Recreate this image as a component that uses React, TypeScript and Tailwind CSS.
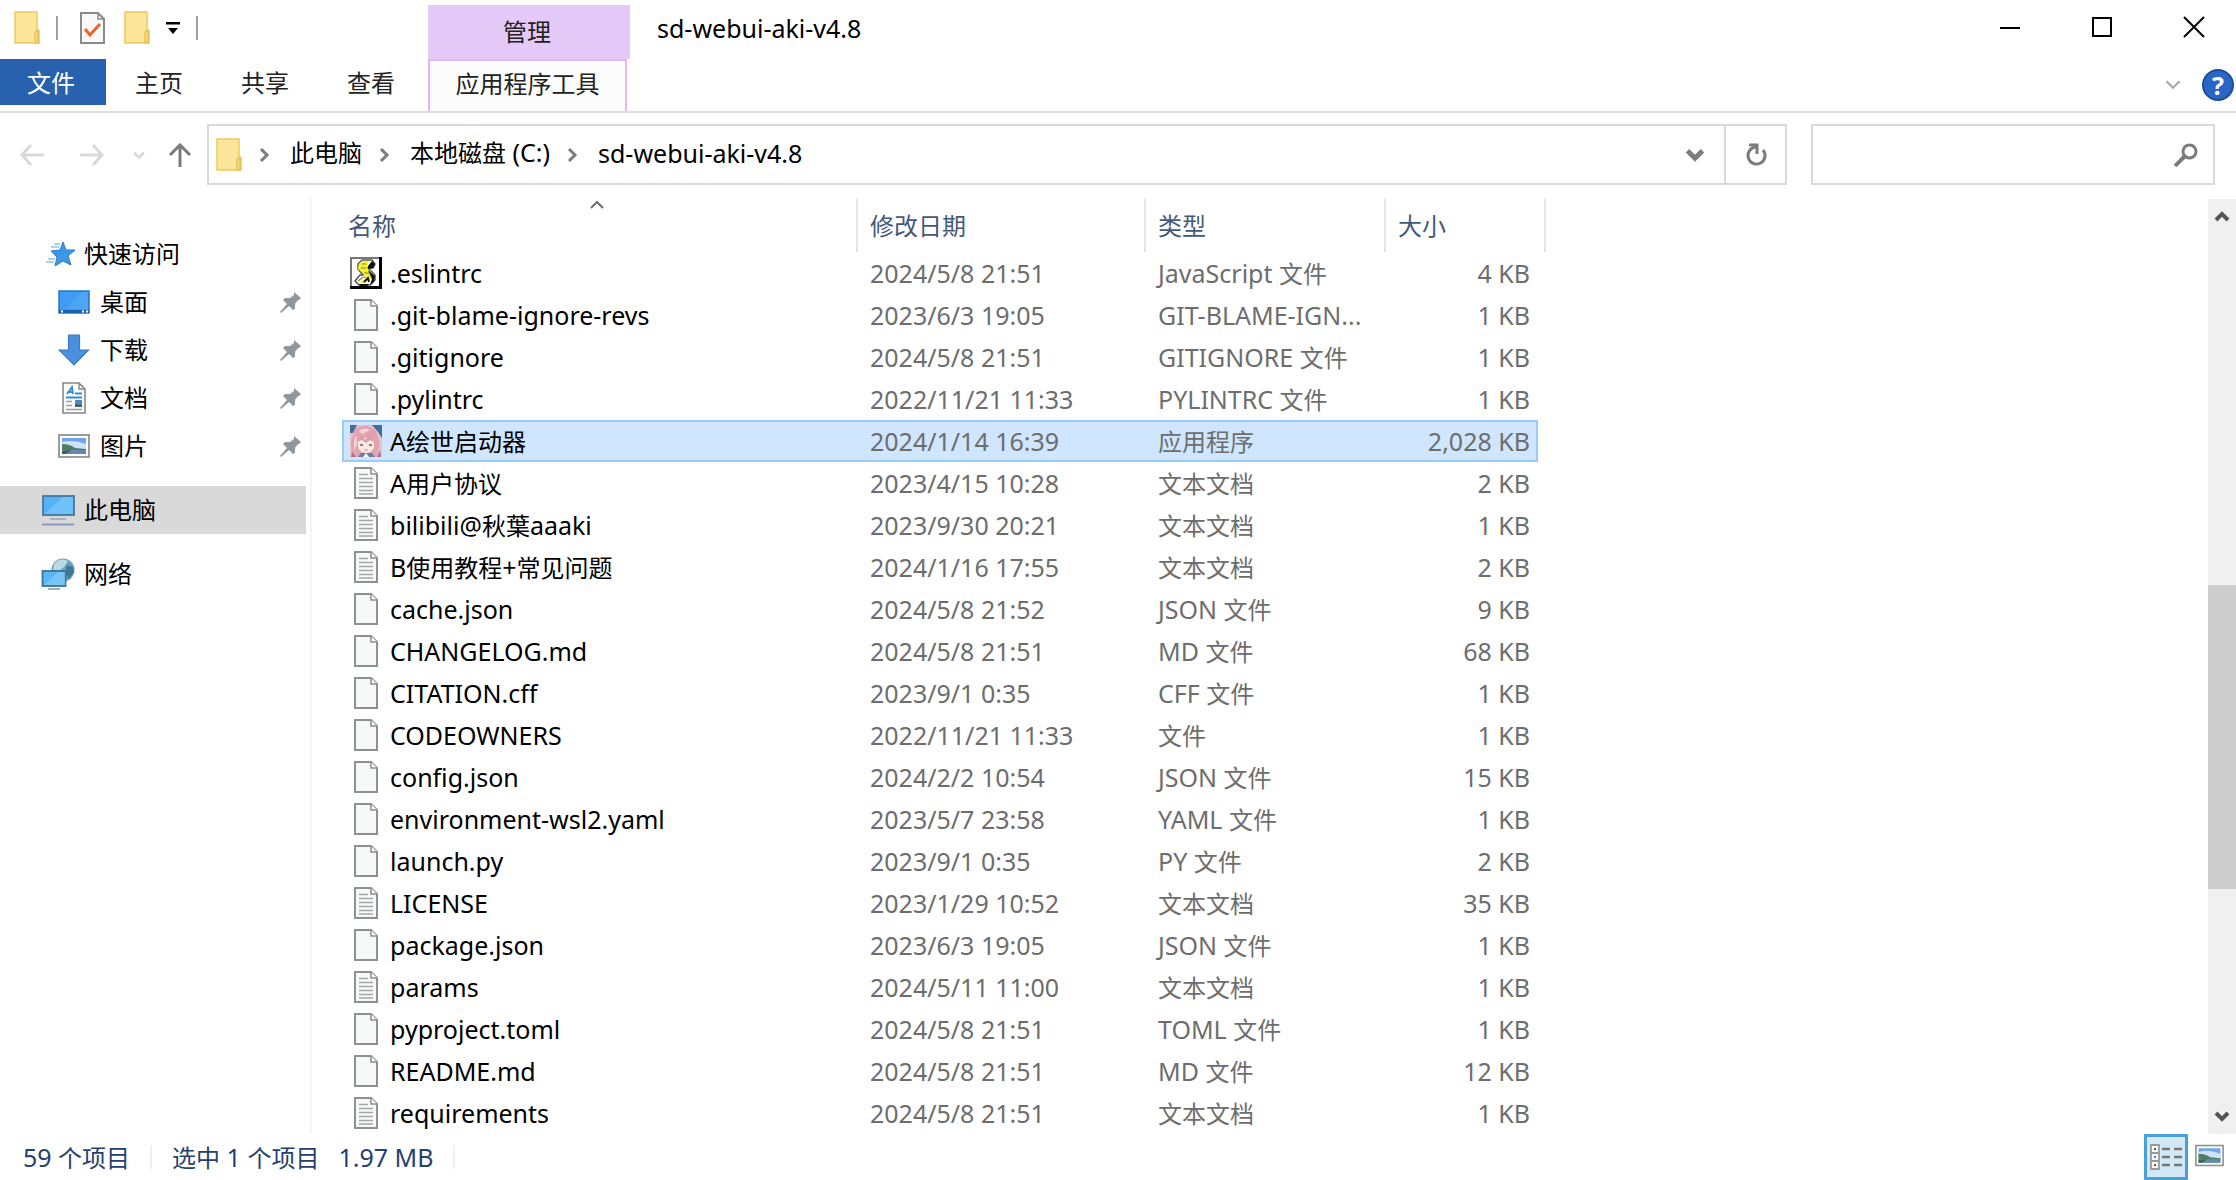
import type { ReactNode } from "react";
import clsx from "clsx";

type FileKind = "script" | "blank" | "text" | "app";

type FileEntry = {
  name: string;
  date: string;
  type: string;
  size: string;
  kind: FileKind;
  selected?: boolean;
};

const FILES: FileEntry[] = [
  { name: ".eslintrc", date: "2024/5/8 21:51", type: "JavaScript 文件", size: "4 KB", kind: "script" },
  { name: ".git-blame-ignore-revs", date: "2023/6/3 19:05", type: "GIT-BLAME-IGN...", size: "1 KB", kind: "blank" },
  { name: ".gitignore", date: "2024/5/8 21:51", type: "GITIGNORE 文件", size: "1 KB", kind: "blank" },
  { name: ".pylintrc", date: "2022/11/21 11:33", type: "PYLINTRC 文件", size: "1 KB", kind: "blank" },
  { name: "A绘世启动器", date: "2024/1/14 16:39", type: "应用程序", size: "2,028 KB", kind: "app", selected: true },
  { name: "A用户协议", date: "2023/4/15 10:28", type: "文本文档", size: "2 KB", kind: "text" },
  { name: "bilibili@秋葉aaaki", date: "2023/9/30 20:21", type: "文本文档", size: "1 KB", kind: "text" },
  { name: "B使用教程+常见问题", date: "2024/1/16 17:55", type: "文本文档", size: "2 KB", kind: "text" },
  { name: "cache.json", date: "2024/5/8 21:52", type: "JSON 文件", size: "9 KB", kind: "blank" },
  { name: "CHANGELOG.md", date: "2024/5/8 21:51", type: "MD 文件", size: "68 KB", kind: "blank" },
  { name: "CITATION.cff", date: "2023/9/1 0:35", type: "CFF 文件", size: "1 KB", kind: "blank" },
  { name: "CODEOWNERS", date: "2022/11/21 11:33", type: "文件", size: "1 KB", kind: "blank" },
  { name: "config.json", date: "2024/2/2 10:54", type: "JSON 文件", size: "15 KB", kind: "blank" },
  { name: "environment-wsl2.yaml", date: "2023/5/7 23:58", type: "YAML 文件", size: "1 KB", kind: "blank" },
  { name: "launch.py", date: "2023/9/1 0:35", type: "PY 文件", size: "2 KB", kind: "blank" },
  { name: "LICENSE", date: "2023/1/29 10:52", type: "文本文档", size: "35 KB", kind: "text" },
  { name: "package.json", date: "2023/6/3 19:05", type: "JSON 文件", size: "1 KB", kind: "blank" },
  { name: "params", date: "2024/5/11 11:00", type: "文本文档", size: "1 KB", kind: "text" },
  { name: "pyproject.toml", date: "2024/5/8 21:51", type: "TOML 文件", size: "1 KB", kind: "blank" },
  { name: "README.md", date: "2024/5/8 21:51", type: "MD 文件", size: "12 KB", kind: "blank" },
  { name: "requirements", date: "2024/5/8 21:51", type: "文本文档", size: "1 KB", kind: "text" },
];

/* Latin runs are set a little larger than the Chinese ones around them */
function Label({ children }: { children: string }) {
  return (
    <>
      {children.split(/([\u4e00-\u9fff]+)/).map((run, i) =>
        i % 2 === 1 ? (
          <span key={i} className="text-[24px]">
            {run}
          </span>
        ) : (
          run
        ),
      )}
    </>
  );
}

/* ---------- Icons ---------- */

function FolderIcon() {
  return (
    <svg className="h-[34px] w-[26px] shrink-0" viewBox="0 0 26 34" aria-hidden="true">
      <path d="M1 1h22v19h2v12H1z" fill="#fbe69a" stroke="#ecca58" strokeWidth="1.5" />
      <path d="M21 32V21l3-2v13z" fill="#f8dc82" stroke="#e3bd4a" strokeWidth="1.2" />
    </svg>
  );
}

function CheckDocIcon() {
  return (
    <svg className="h-[32px] w-[25px]" viewBox="0 0 25 32" aria-hidden="true">
      <path d="M1 1h17l6 6v24H1z" fill="#f9f9fa" stroke="#8a8a8a" strokeWidth="2" />
      <path d="M18 1v6h6" fill="none" stroke="#8a8a8a" strokeWidth="1.5" />
      <path d="M5 17l5 6 10-11" fill="none" stroke="#e9642a" strokeWidth="3" />
    </svg>
  );
}

function Chevron({ className, dir, width = 3 }: { className?: string; dir: "up" | "down" | "right"; width?: number }) {
  const d = { up: "M2 9l6-6 6 6", down: "M2 3l6 6 6-6", right: "M5 0l6 6-6 6" }[dir];
  return (
    <svg className={clsx("overflow-visible", className)} viewBox="0 0 16 12" fill="none" stroke="currentColor" strokeWidth={width} aria-hidden="true">
      <path d={d} />
    </svg>
  );
}

function Arrow({ className, d }: { className?: string; d: string }) {
  return (
    <svg className={clsx("h-6 w-6", className)} viewBox="0 0 24 24" fill="none" stroke="currentColor" strokeWidth="3" aria-hidden="true">
      <path d={d} />
    </svg>
  );
}

function PageIcon({ lines }: { lines?: boolean }) {
  return (
    <svg className="h-8 w-6" viewBox="0 0 24 32" aria-hidden="true">
      <path d="M1 1h16l6 6v24H1z" fill="#f7f8f9" stroke="#8e9091" strokeWidth="2" />
      <path d="M17 1v6h6" fill="#fff" stroke="#8e9091" strokeWidth="1.6" />
      {lines && <path d="M5 7.5h9M5 11.5h14M5 15.5h14M5 19.5h14M5 23.5h14M5 27h14" stroke="#a4a6a7" strokeWidth="1.6" />}
    </svg>
  );
}

function ScriptIcon() {
  return (
    <svg className="h-8 w-8" viewBox="0 0 32 32" aria-hidden="true">
      <rect x="1" y="1" width="29" height="29" fill="#fff" stroke="#777" strokeWidth="2" />
      <path d="M0 30.5h32M30.5 0v32" stroke="#000" strokeWidth="3" />
      <path d="M12 3h10l3 4-2 4h-5l7 7v5l-5 5H9l-4-4 5-6h3l-5-6V7z" fill="#fff" stroke="#555" strokeWidth="1.5" />
      <path d="M12 4h7l-2 7 7 7-1 4-4 1-6 4-3-2 6-4-1-3-7-6 1-5z" fill="#f6f02f" />
      <path d="M18 9l4-5 3 3-2 4-5 1zM18 13l7 6-1 6-4 3 2-6zM9 27h10l-2 2h-7z" fill="#111" />
      <path d="M12 7h4M11 11h5M14 16h5M11 21l5-1M8 24l4-3" stroke="#8a8620" strokeWidth="1.2" />
      <path d="M14 25l4-4 1 4" fill="none" stroke="#111" strokeWidth="1.8" />
    </svg>
  );
}

function AvatarIcon() {
  return (
    <svg className="h-8 w-8" viewBox="0 0 32 32" aria-hidden="true">
      <rect width="32" height="32" rx="1" fill="#e8c1c9" />
      <path d="M0 0h7L3 8H0zM22 0h10v13l-4-6z" fill="#3f6e9c" />
      <path d="M5 4q10-8 21 2l4 12-3 14H2L1 17z" fill="#e0a3b1" />
      <path d="M9 6q5-4 11-1l-8 4zM4 15l2-5 1 9-3 8z" fill="#f6d3d8" />
      <path d="M8 15q8-5 16 0v7q-2 6-8 6t-8-6z" fill="#f8e9e2" />
      <path d="M7 17l5-8 3 6 4-6 6 9-5-3-4 3-4-3z" fill="#dc9cab" />
      <path d="M10 20h3M19 20h3" stroke="#93787c" strokeWidth="2" />
      <path d="M14 25h4" stroke="#cf9a97" strokeWidth="1" />
      <path d="M8 32l3-4h11l3 4z" fill="#6a7da5" />
      <path d="M13 32l3-4 3 4z" fill="#fff" />
      <path d="M2 27l4 5H1zM30 25l-3 7h4z" fill="#b76f86" />
    </svg>
  );
}

function StarIcon() {
  return (
    <svg className="h-6 w-[30px]" viewBox="0 0 30 24" aria-hidden="true">
      <path d="M18 0l3 8 9 0-7 6 3 9-8-4-8 5 2-9-6-6 9-1z" fill="#3c97e4" stroke="#2c7cc8" strokeWidth="1" />
      <path d="M9 2h6M6 5h8M3 17h7M1 20h8" stroke="#8cc4f1" strokeWidth="1.4" />
    </svg>
  );
}

function DesktopIcon() {
  return (
    <svg className="h-8 w-8" viewBox="0 0 32 32" aria-hidden="true">
      <rect x="1" y="5" width="30" height="22" fill="#3f9bf3" stroke="#2476c5" strokeWidth="1.5" />
      <path d="M8 23L24 6h6v17z" fill="#5aabf7" opacity=".6" />
      <path d="M1 25.5h30" stroke="#1b62ab" strokeWidth="3" />
      <path d="M3 25.5h2M24 25.5h2M28 25.5h2" stroke="#fff" strokeWidth="2" />
    </svg>
  );
}

function DownloadIcon() {
  return (
    <svg className="h-8 w-8" viewBox="0 0 32 32" aria-hidden="true">
      <path d="M10.5 1h11v15h9L16 31 1 16h9.5z" fill="#4a90de" stroke="#3b7ac4" strokeWidth="1.2" />
    </svg>
  );
}

function DocumentIcon() {
  return (
    <svg className="h-8 w-8" viewBox="0 0 32 32" aria-hidden="true">
      <path d="M5 1h16l6 6v24H5z" fill="#fff" stroke="#858789" strokeWidth="1.6" />
      <path d="M21 1v6h6" fill="none" stroke="#858789" strokeWidth="1.4" />
      <path d="M9 12l5-7 1 7M11 10h4M17 11.5h7" fill="none" stroke="#2f8bd8" strokeWidth="1.8" />
      <path d="M8 15.5h16" stroke="#2f8bd8" strokeWidth="2" />
      <path d="M8 19.5h6M8 23.5h6M8 27.5h16" stroke="#9b9d9f" strokeWidth="1.5" />
      <path d="M17 18h7v7h-7z" fill="#4e86c8" />
      <path d="M17 22l7 1v2h-7z" fill="#3e6650" />
    </svg>
  );
}

function PictureIcon({ className = "h-8 w-8" }: { className?: string }) {
  return (
    <svg className={className} viewBox="0 0 32 32" aria-hidden="true">
      <rect x="1" y="5" width="30" height="22" fill="#fff" stroke="#919395" strokeWidth="1.8" />
      <path d="M4 8h24v16H4z" fill="#6fa5ee" />
      <path d="M4 12q12-3 24 2v6H4z" fill="#cfe2f6" />
      <path d="M4 14q8 0 13 4l11 1v2H4z" fill="#4f7e62" />
      <path d="M4 20h24v4H4z" fill="#6288ad" />
      <path d="M4 21l9-1-5 4H4z" fill="#3d6350" />
    </svg>
  );
}

function ComputerIcon() {
  return (
    <svg className="h-8 w-[34px]" viewBox="0 0 34 32" aria-hidden="true">
      <rect x="2" y="2" width="31" height="19" fill="#55b2f6" stroke="#44779f" strokeWidth="1.8" />
      <path d="M3 20L22 3h10v17z" fill="#84cbfb" opacity=".6" />
      <path d="M9 25h16" stroke="#9aa9b5" strokeWidth="1.6" />
      <path d="M1 30.5h32" stroke="#8794b8" strokeWidth="1.8" />
    </svg>
  );
}

function NetworkIcon() {
  return (
    <svg className="h-8 w-[34px]" viewBox="0 0 34 32" aria-hidden="true">
      <circle cx="22" cy="12" r="11.5" fill="#6a9fbd" />
      <path d="M13 6q6-7 14-3l-4 6-5 4-6-1z" fill="#b9dbe6" />
      <path d="M26 7l6 2 1 5-5 7-4-6z" fill="#3f7995" />
      <rect x="1.5" y="13" width="23" height="15" fill="#5ab5f5" stroke="#3c739a" strokeWidth="1.8" />
      <path d="M3 27L17 14h7v13z" fill="#8ccffb" opacity=".6" />
      <path d="M7 31h12" stroke="#8194a1" strokeWidth="1.5" />
    </svg>
  );
}

function PinIcon() {
  return (
    <svg className="h-[21px] w-[21px]" viewBox="0 0 21 21" aria-hidden="true">
      <path d="M14 0l7 6-2 2-1 0-3 4 0 5-2 1-4-4-8 7-1-1 7-8-4-4 2-2 5 0 4-3 0-1z" fill="#8e979e" />
    </svg>
  );
}

const FILE_ICONS: Record<FileKind, ReactNode> = {
  script: <ScriptIcon />,
  blank: <PageIcon />,
  text: <PageIcon lines />,
  app: <AvatarIcon />,
};

/* ---------- Title bar and ribbon ---------- */

function TitleBar() {
  return (
    <header className="flex h-[113px] shrink-0 border-b-2 border-[#dfdfdf]">
      <div className="flex w-[428px] shrink-0 flex-col">
        <div className="flex h-[59px] items-center pb-1 pl-[14px]">
          <FolderIcon />
          <span className="ml-4 h-6 w-0.5 bg-[#a0a0a0]" />
          <button type="button" aria-label="属性" className="ml-[22px]">
            <CheckDocIcon />
          </button>
          <button type="button" aria-label="新建文件夹" className="ml-[19px]">
            <FolderIcon />
          </button>
          <button type="button" aria-label="自定义快速访问工具栏" className="ml-4">
            <svg className="h-3 w-[14px]" viewBox="0 0 14 12" aria-hidden="true">
              <path d="M0 0h14v2.5H0zM2 6h10l-5 6z" fill="#000" />
            </svg>
          </button>
          <span className="ml-4 h-6 w-0.5 bg-[#a0a0a0]" />
        </div>

        <nav aria-label="功能区" className="flex h-[46px] text-[24px] text-[#222]">
          <button type="button" className="w-[106px] bg-[#2862ae] pt-0.5 pr-1 text-white">
            文件
          </button>
          <button type="button" className="w-[106px] pt-0.5">主页</button>
          <button type="button" className="w-[106px] pt-0.5">共享</button>
          <button type="button" className="w-[106px] pt-0.5">查看</button>
        </nav>
      </div>

      <div className="mt-[5px] flex w-[202px] shrink-0 flex-col text-[24px] text-[#222]">
        <div className="flex h-[54px] items-center justify-center bg-[#e5c9f9] pr-1">管理</div>
        <button type="button" className="mr-[3px] flex-1 border-x-2 border-t-2 border-[#dfb9f6] bg-[#fcfcfc] pb-1">
          应用程序工具
        </button>
      </div>

      <h1 className="mt-[10px] ml-[27px] flex-1 leading-9">sd-webui-aki-v4.8</h1>

      <div className="flex flex-col items-end">
        <div className="flex h-[54px] items-center gap-2">
          <button type="button" aria-label="最小化" className="flex w-[84px] justify-center">
            <svg className="h-[22px] w-[22px]" viewBox="0 0 22 22" aria-hidden="true">
              <path d="M1 12h20" stroke="#000" strokeWidth="2" />
            </svg>
          </button>
          <button type="button" aria-label="最大化" className="flex w-[84px] justify-center">
            <svg className="h-[22px] w-[22px]" viewBox="0 0 22 22" aria-hidden="true">
              <path d="M2 2h18v18H2z" fill="none" stroke="#000" strokeWidth="2" />
            </svg>
          </button>
          <button type="button" aria-label="关闭" className="flex w-[84px] justify-center">
            <svg className="h-[22px] w-[22px]" viewBox="0 0 22 22" aria-hidden="true">
              <path d="M1 1l20 20M21 1L1 21" stroke="#000" strokeWidth="2" />
            </svg>
          </button>
        </div>
        <div className="flex flex-1 items-center gap-5 pt-1 pr-[2px]">
          <button type="button" aria-label="展开功能区" className="text-[#a8a8a8]">
            <Chevron dir="down" width={2} className="h-[13px] w-[18px]" />
          </button>
          <button type="button" aria-label="帮助" className="flex h-8 w-8 items-center justify-center rounded-full border-2 border-[#1b4f96] bg-[#2a66c8] text-[25px] leading-7 font-bold text-white">
            ?
          </button>
        </div>
      </div>
    </header>
  );
}

/* ---------- Address bar ---------- */

const CRUMBS = ["此电脑", "本地磁盘 (C:)", "sd-webui-aki-v4.8"];

function AddressBar() {
  return (
    <div className="flex shrink-0 pt-[11px] pr-[21px] pb-[14px]">
      <div className="flex w-[207px] shrink-0 items-center pl-[20px]">
        <button type="button" aria-label="后退" className="text-[#d9d9d9]">
          <Arrow d="M24 12H2M11 2L2 12l9 10" />
        </button>
        <button type="button" aria-label="前进" className="ml-9 text-[#d9d9d9]">
          <Arrow d="M0 12h22M13 2l9 10-9 10" />
        </button>
        <button type="button" aria-label="最近浏览的位置" className="ml-7 text-[#d9d9d9]">
          <Chevron dir="down" className="h-[10px] w-[14px]" />
        </button>
        <button type="button" aria-label="上移" className="ml-[22px] text-[#7c7c7c]">
          <Arrow d="M12 24V2M2 12L12 2l10 10" />
        </button>
      </div>

      <div className="flex h-[61px] flex-1 items-center border-2 border-[#d9d9d9] pl-[7px]">
        <FolderIcon />
        {CRUMBS.map((crumb) => (
          <div key={crumb} className="flex items-center">
            <Chevron dir="right" className="mr-[18px] ml-[14px] h-3 w-4 text-[#7c7c7c]" />
            <button type="button" className="pb-1 leading-8">
              <Label>{crumb}</Label>
            </button>
          </div>
        ))}
        <button type="button" aria-label="以前的位置" className="mr-[19px] ml-auto text-[#7c7c7c]">
          <Chevron dir="down" width={4} className="h-[15px] w-5" />
        </button>
        <button type="button" aria-label="刷新" className="flex h-full w-[61px] items-center justify-center border-l-2 border-[#d9d9d9]">
          <svg className="h-6 w-6" viewBox="0 0 24 24" fill="none" stroke="#7c7c7c" strokeWidth="3" aria-hidden="true">
            <path d="M19 7a8.5 8.5 0 1 1-7-3" />
            <path d="M5 2h8v9" />
          </svg>
        </button>
      </div>

      <label className="ml-6 flex w-[404px] shrink-0 items-center border-2 border-[#d9d9d9] pr-[15px]">
        <input type="text" aria-label="搜索" className="h-full min-w-0 flex-1 px-3 outline-none" />
        <svg className="h-6 w-6" viewBox="0 0 24 24" fill="none" stroke="#7c7c7c" aria-hidden="true">
          <circle cx="15.5" cy="8.5" r="6.5" strokeWidth="3" />
          <path d="M11 13L1 23" strokeWidth="4" />
        </svg>
      </label>
    </div>
  );
}

/* ---------- Navigation pane ---------- */

const QUICK_ACCESS = [
  { label: "桌面", icon: <DesktopIcon /> },
  { label: "下载", icon: <DownloadIcon /> },
  { label: "文档", icon: <DocumentIcon /> },
  { label: "图片", icon: <PictureIcon /> },
];

function Sidebar() {
  return (
    <nav aria-label="导航窗格" className="w-[312px] shrink-0 border-r-2 border-[#f5f5f5] pt-[31px] pr-1 text-[24px] leading-8">
      <a href="#quick" className="flex h-12 items-center gap-[9px] pl-[45px]">
        <StarIcon />
        快速访问
      </a>
      {QUICK_ACCESS.map((item) => (
        <a key={item.label} href={`#${item.label}`} className="flex h-12 items-center gap-[10px] pr-[5px] pl-[58px]">
          {item.icon}
          <span className="flex-1">{item.label}</span>
          <PinIcon />
        </a>
      ))}
      <a href="#pc" className="mt-4 flex h-12 items-center gap-[9px] bg-[#d9d9d9] pl-[41px]">
        <ComputerIcon />
        此电脑
      </a>
      <a href="#network" className="mt-4 flex h-12 items-center gap-[9px] pl-[41px]">
        <NetworkIcon />
        网络
      </a>
    </nav>
  );
}

/* ---------- File list ---------- */

function FileRow({ file }: { file: FileEntry }) {
  const cell = file.selected ? "border-y-2 border-[#99cdf8] bg-[#cfe6fe]" : "";

  return (
    <tr className="h-[42px]" aria-selected={file.selected}>
      <td className={clsx("p-0", cell, file.selected && "border-l-2")}>
        <div className={clsx("flex items-center gap-2", file.selected ? "pl-[6px]" : "pl-2")}>
          <span className="flex w-8 justify-center">{FILE_ICONS[file.kind]}</span>
          <span className="text-black">
            <Label>{file.name}</Label>
          </span>
        </div>
      </td>
      <td className={clsx("p-0 pl-3", cell)}>{file.date}</td>
      <td className={clsx("p-0 pl-3", cell)}>
        <Label>{file.type}</Label>
      </td>
      <td className={clsx("p-0 text-right", cell, file.selected ? "border-r-2 pr-[6px]" : "pr-2")}>{file.size}</td>
      <td className="p-0" />
    </tr>
  );
}

function FileList() {
  return (
    <main className="min-w-0 flex-1 overflow-hidden pl-[30px]">
      <table className="w-[1204px] table-fixed border-separate border-spacing-0 leading-[34px] whitespace-nowrap text-[#6d6d6d]">
        <colgroup>
          <col className="w-[516px]" />
          <col className="w-[288px]" />
          <col className="w-[240px]" />
          <col className="w-[152px]" />
          <col className="w-[8px]" />
        </colgroup>
        <thead className="text-[24px] text-[#44597a]">
          <tr className="h-[53px]">
            <th scope="col" aria-sort="ascending" className="relative border-r-2 border-[#e5e5e5] p-0 pl-[6px] text-left font-normal">
              名称
              <Chevron dir="up" width={2} className="absolute top-0 left-[247px] h-3 w-4 text-[#6d6d6d]" />
            </th>
            <th scope="col" className="border-r-2 border-[#e5e5e5] p-0 pl-3 text-left font-normal">修改日期</th>
            <th scope="col" className="border-r-2 border-[#e5e5e5] p-0 pl-3 text-left font-normal">类型</th>
            <th scope="col" colSpan={2} className="border-r-2 border-[#e5e5e5] p-0 pl-3 text-left font-normal">大小</th>
          </tr>
        </thead>
        <tbody>
          {FILES.map((file) => (
            <FileRow key={file.name} file={file} />
          ))}
        </tbody>
      </table>
    </main>
  );
}

function ScrollBar() {
  return (
    <div className="flex w-7 shrink-0 flex-col bg-[#f0f0f0] text-[#555]">
      <button type="button" aria-label="向上滚动" className="flex h-9 items-center justify-center">
        <Chevron dir="up" width={4} className="h-3 w-4" />
      </button>
      <div className="grow-[350]" />
      <div className="grow-[304] bg-[#cdcdcd]" />
      <div className="grow-[209]" />
      <button type="button" aria-label="向下滚动" className="flex h-9 items-center justify-center">
        <Chevron dir="down" width={4} className="h-3 w-4" />
      </button>
    </div>
  );
}

/* ---------- Status bar ---------- */

function StatusBar() {
  return (
    <footer className="flex h-[46px] shrink-0 items-center pr-3 pl-[23px] leading-8 text-[#26416b]">
      <span>
        <Label>59 个项目</Label>
      </span>
      <span className="mx-5 h-6 w-0.5 bg-[#f0f0f0]" />
      <span>
        <Label>选中 1 个项目</Label>
      </span>
      <span className="ml-[19px]">1.97 MB</span>
      <span className="mx-5 h-6 w-0.5 bg-[#f0f0f0]" />

      <button type="button" aria-label="详细信息" aria-pressed="true" className="ml-auto flex h-full w-11 items-center justify-center border-[3px] border-[#4aa0d8] bg-[#d3e8f6]">
        <svg className="h-[26px] w-8" viewBox="0 0 32 26" fill="none" aria-hidden="true">
          <path d="M1 1h8v24H1zM1 9h8M1 17h8" fill="#fff" stroke="#999" strokeWidth="1.8" />
          <path d="M12 5h8M24 5h8M12 13h8M24 13h8M12 21h8M24 21h8" stroke="#777" strokeWidth="2.5" />
          <path d="M4 5h2" stroke="#2c6b4a" strokeWidth="2" />
          <path d="M4 13h2" stroke="#3b7df0" strokeWidth="2" />
          <path d="M4 21h2" stroke="#d62c2c" strokeWidth="2" />
        </svg>
      </button>
      <button type="button" aria-label="大缩略图" className="ml-[7px] pb-1">
        <PictureIcon className="h-[29px] w-[29px]" />
      </button>
    </footer>
  );
}

export default function App() {
  return (
    <div className="flex min-h-screen flex-col bg-white font-['Noto_Sans','Noto_Sans_CJK_SC',sans-serif] text-[25px] text-black">
      <TitleBar />
      <AddressBar />
      <div className="flex flex-1">
        <Sidebar />
        <FileList />
        <ScrollBar />
      </div>
      <StatusBar />
    </div>
  );
}
